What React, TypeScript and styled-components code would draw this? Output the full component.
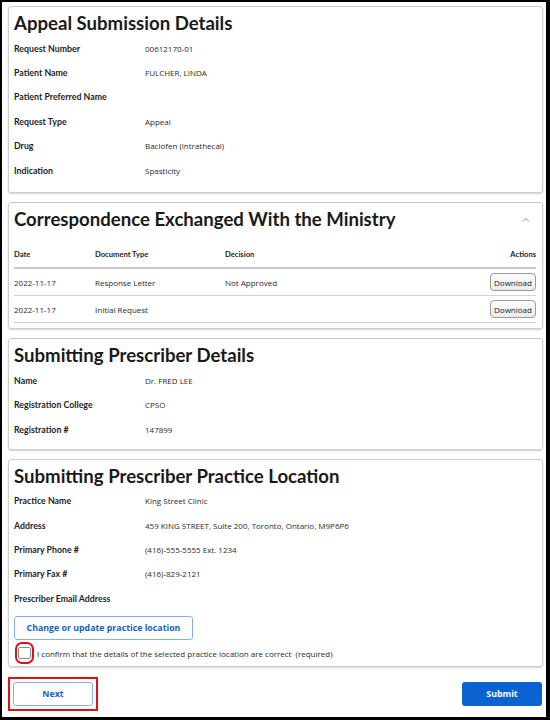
import React from "react";
import styled, { createGlobalStyle } from "styled-components";

const Global = createGlobalStyle`
  html, body { margin: 0; padding: 0; background: #fff; }
  * { box-sizing: border-box; }
`;

const Frame = styled.div`
  width: 550px;
  height: 720px;
  border: 2px solid #000;
  border-right-width: 4px;
  border-bottom-width: 3px;
  padding: 4px 3px 0 6px;
  display: flex;
  flex-direction: column;
  gap: 9px;
  background: #fff;
  font-family: "Open Sans", "Liberation Sans", sans-serif;
  color: #222;
`;

const Card = styled.section<{ $pb?: number }>`
  border: 1px solid #cdcdcd;
  border-radius: 3px;
  box-shadow: 0 1px 2px rgba(0, 0, 0, 0.18);
  padding: 0 6px ${(p) => p.$pb ?? 9}px 5px;
  display: flex;
  flex-direction: column;
`;

const TitleRow = styled.div`
  display: flex;
  align-items: center;
  justify-content: space-between;
  height: 29px;
  padding-top: 3px;
`;

const Title = styled.h2`
  margin: 0;
  font-family: Lato, "Liberation Sans", sans-serif;
  font-weight: 700;
  font-size: 18.6px;
  line-height: 26px;
  color: #1a1a1a;
`;

const Row = styled.div`
  display: grid;
  grid-template-columns: 131px 1fr;
  align-items: center;
  height: 24.4px;
`;

const Label = styled.div`
  font-family: Lato, "Liberation Sans", sans-serif;
  font-weight: 700;
  font-size: 8.8px;
  color: #1e1e1e;
`;

const Value = styled.div`
  font-size: 8px;
  color: #2a2a2a;
`;

const Table = styled.div`
  margin-top: 9px;
  display: flex;
  flex-direction: column;
`;

const TRow = styled.div<{ $head?: boolean; $h: number }>`
  display: grid;
  grid-template-columns: 81px 130px 1fr auto;
  align-items: center;
  height: ${(p) => p.$h}px;
  border-bottom: ${(p) => (p.$head ? "2px solid #c8c8c8" : "1px solid #d2d2d2")};
`;

const Th = styled.div<{ $right?: boolean }>`
  font-family: Lato, "Liberation Sans", sans-serif;
  font-weight: 700;
  font-size: 7.6px;
  color: #1e1e1e;
  text-align: ${(p) => (p.$right ? "right" : "left")};
`;

const Td = styled.div`
  font-size: 8px;
  color: #2a2a2a;
`;

const DownloadBtn = styled.button`
  width: 46px;
  height: 18px;
  padding: 0;
  border: 1px solid #9a9a9a;
  border-radius: 4px;
  background: linear-gradient(#fafafa, #ececec);
  font-family: "Open Sans", "Liberation Sans", sans-serif;
  font-size: 8px;
  color: #222;
`;

const OutlineBtn = styled.button<{ $w: number }>`
  width: ${(p) => p.$w}px;
  height: 24px;
  border: 1px solid #86b1e6;
  border-radius: 3px;
  background: #fff;
  color: #1561c4;
  font-family: "Open Sans", "Liberation Sans", sans-serif;
  font-weight: 700;
  font-size: 8.8px;
  padding: 0;
`;

const ActionRow = styled.div`
  margin-top: 6px;
  display: flex;
`;

const ConfirmRow = styled.label`
  display: flex;
  align-items: center;
  gap: 6px;
  height: 26px;
  padding-left: 4px;
  font-size: 8px;
  color: #2a2a2a;
`;

const Annotated = styled.span<{ $x: number; $y: number; $r: number }>`
  position: relative;
  display: inline-flex;
  &::after {
    content: "";
    position: absolute;
    left: -${(p) => p.$x}px;
    right: -${(p) => p.$x}px;
    top: -${(p) => p.$y}px;
    bottom: -${(p) => p.$y}px;
    border: 2.5px solid #e0101a;
    border-radius: ${(p) => p.$r}px;
    pointer-events: none;
  }
`;

const Box = styled.span`
  width: 13px;
  height: 12px;
  border: 1px solid #8a8a8a;
  border-radius: 2px;
  background: #fff;
`;

const Footer = styled.div`
  display: flex;
  justify-content: space-between;
  align-items: center;
  margin-top: 6px;
  padding: 0 1px 0 5px;
`;

const SubmitBtn = styled.button`
  width: 80px;
  height: 24px;
  border: none;
  border-radius: 3px;
  background: #0b63d1;
  color: #fff;
  font-family: "Open Sans", "Liberation Sans", sans-serif;
  font-weight: 700;
  font-size: 8.8px;
  padding: 0;
`;

const Chevron = () => (
  <svg width="8" height="6" viewBox="0 0 8 6" style={{ marginRight: 6, marginTop: 2 }}>
    <polyline points="1,4.5 4,1.5 7,4.5" fill="none" stroke="#888" strokeWidth="1" />
  </svg>
);

const InfoRows = ({ rows }: { rows: [string, string][] }) => (
  <>
    {rows.map(([l, v]) => (
      <Row key={l}>
        <Label>{l}</Label>
        <Value>{v}</Value>
      </Row>
    ))}
  </>
);

export default function App() {
  return (
    <>
      <Global />
      <Frame>
        <Card $pb={10}>
          <TitleRow>
            <Title>Appeal Submission Details</Title>
          </TitleRow>
          <InfoRows
            rows={[
              ["Request Number", "00612170-01"],
              ["Patient Name", "FULCHER, LINDA"],
              ["Patient Preferred Name", ""],
              ["Request Type", "Appeal"],
              ["Drug", "Baclofen (intrathecal)"],
              ["Indication", "Spasticity"],
            ]}
          />
        </Card>

        <Card $pb={5}>
          <TitleRow>
            <Title>Correspondence Exchanged With the Ministry</Title>
            <Chevron />
          </TitleRow>
          <Table>
            <TRow $head $h={28}>
              <Th>Date</Th>
              <Th>Document Type</Th>
              <Th>Decision</Th>
              <Th $right>Actions</Th>
            </TRow>
            <TRow $h={27}>
              <Td>2022-11-17</Td>
              <Td>Response Letter</Td>
              <Td>Not Approved</Td>
              <DownloadBtn>Download</DownloadBtn>
            </TRow>
            <TRow $h={27}>
              <Td>2022-11-17</Td>
              <Td>Initial Request</Td>
              <Td></Td>
              <DownloadBtn>Download</DownloadBtn>
            </TRow>
          </Table>
        </Card>

        <Card $pb={7}>
          <TitleRow>
            <Title>Submitting Prescriber Details</Title>
          </TitleRow>
          <InfoRows
            rows={[
              ["Name", "Dr. FRED LEE"],
              ["Registration College", "CPSO"],
              ["Registration #", "147899"],
            ]}
          />
        </Card>

        <Card $pb={0}>
          <TitleRow>
            <Title>Submitting Prescriber Practice Location</Title>
          </TitleRow>
          <InfoRows
            rows={[
              ["Practice Name", "King Street Clinic"],
              ["Address", "459 KING STREET, Suite 200, Toronto, Ontario, M9P6P6"],
              ["Primary Phone #", "(416)-555-5555 Ext. 1234"],
              ["Primary Fax #", "(416)-829-2121"],
              ["Prescriber Email Address", ""],
            ]}
          />
          <ActionRow>
            <OutlineBtn $w={179}>Change or update practice location</OutlineBtn>
          </ActionRow>
          <ConfirmRow>
            <Annotated $x={3} $y={5} $r={7}>
              <Box />
            </Annotated>
            <span>I confirm that the details of the selected practice location are correct&nbsp; (required)</span>
          </ConfirmRow>
        </Card>

        <Footer>
          <Annotated $x={5} $y={5} $r={0}>
            <OutlineBtn $w={80}>Next</OutlineBtn>
          </Annotated>
          <SubmitBtn>Submit</SubmitBtn>
        </Footer>
      </Frame>
    </>
  );
}
